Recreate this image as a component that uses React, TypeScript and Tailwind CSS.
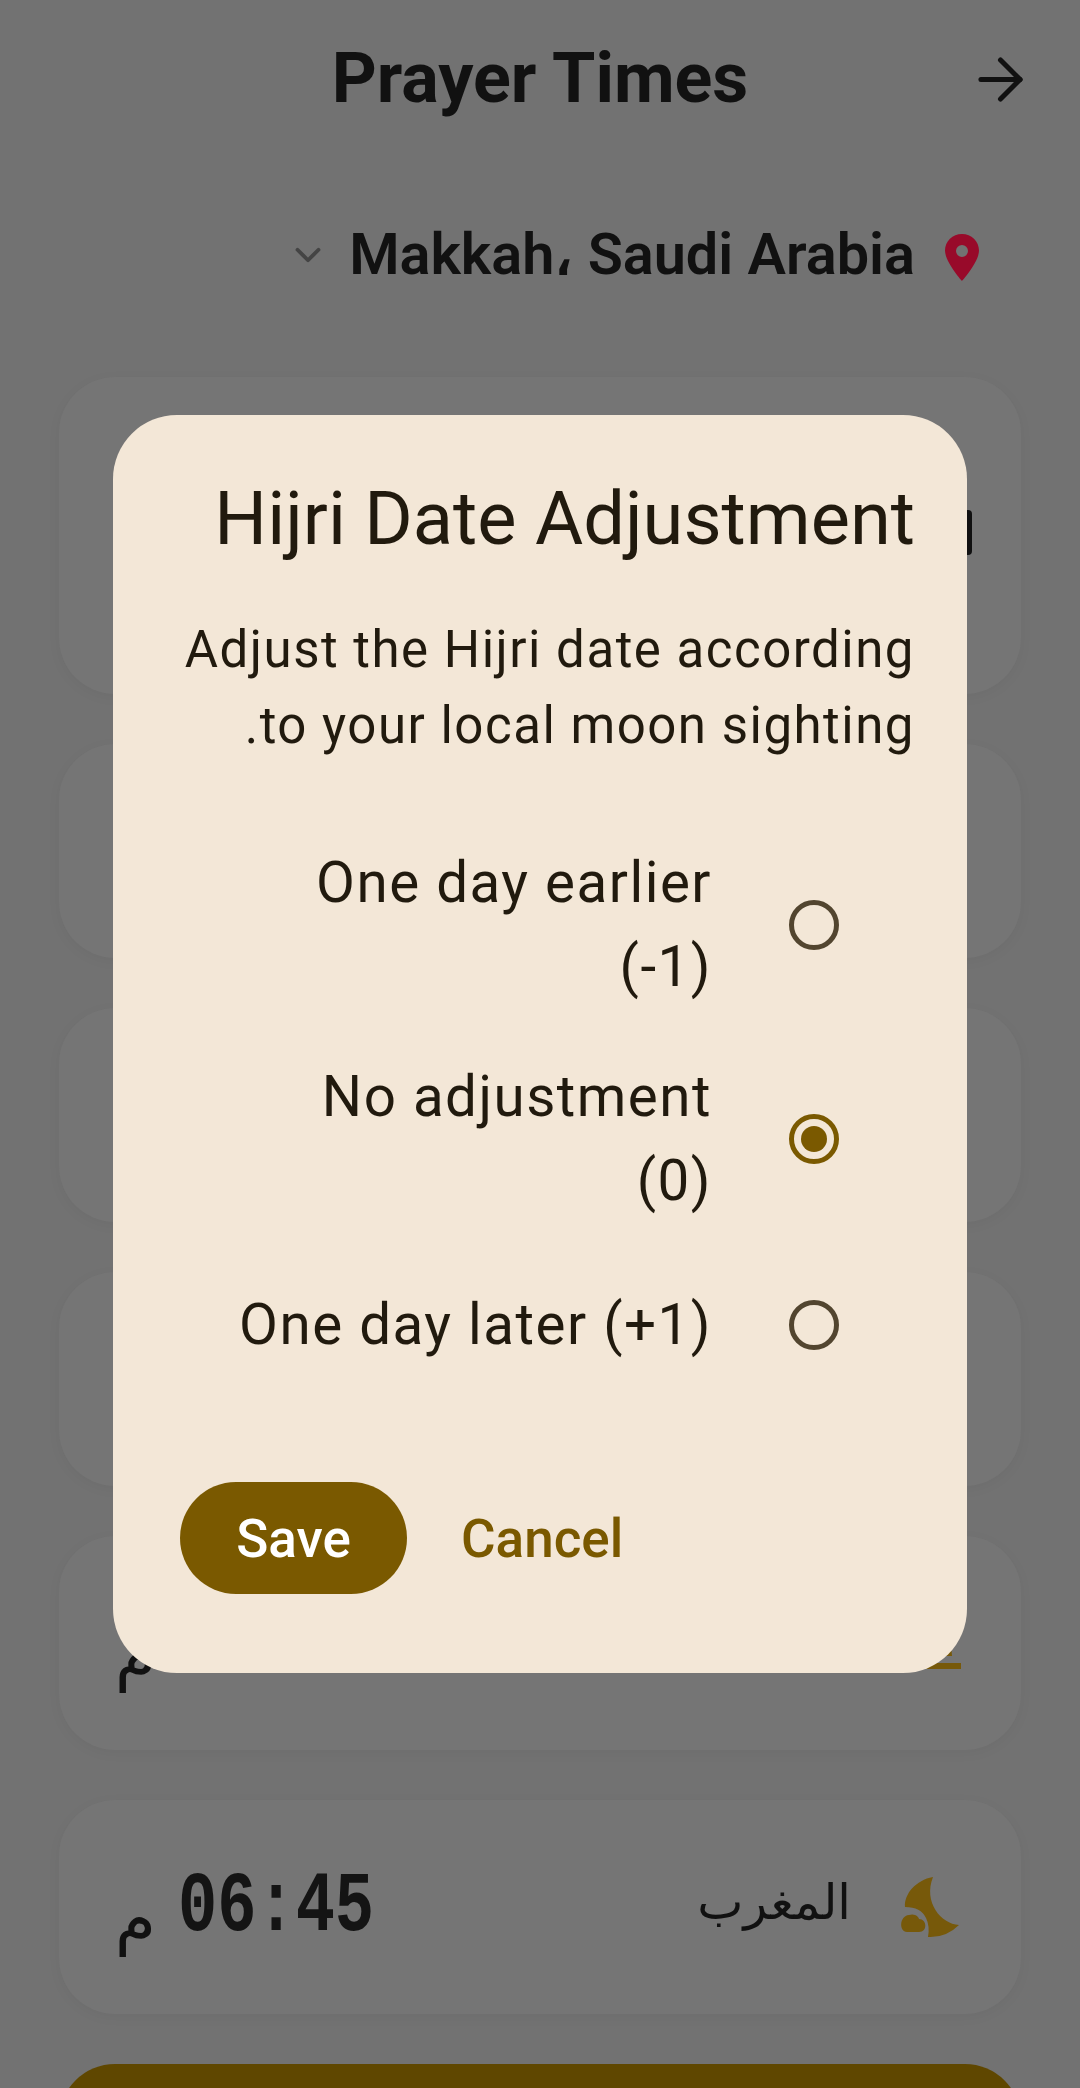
import { ArrowRight, ChevronDown } from 'lucide-react';

// Only what shows around the dialog is filled in; the rest of the rows sit behind it.
const prayers: { id: number; name?: string; time?: string; suffix?: string; icon?: 'sunset' | 'moon' }[] = [
  { id: 1 },
  { id: 2 },
  { id: 3 },
  { id: 4, suffix: 'م', icon: 'sunset' },
  { id: 5, name: 'المغرب', time: '06:45', suffix: 'م', icon: 'moon' },
];

const options = [
  { label: 'One day earlier (-1)', selected: false },
  { label: 'No adjustment (0)', selected: true },
  { label: 'One day later (+1)', selected: false },
];

const SunsetIcon = () => (
  <svg viewBox="0 0 64 64" className="h-[64px] w-[64px] fill-[#77590a]">
    <path d="M9 45a23 23 0 0 1 46 0z" />
    <rect x="0" y="52" width="64" height="6" />
  </svg>
);

const MoonIcon = () => (
  <svg viewBox="38 34 62 66" className="h-[66px] w-[62px] fill-[#77590a]">
    <path d="M72 37C55 40 43 54 44 67Q60 67 65 78Q69 86 67 97Q85 98 98 85C80 84 62 62 72 37Z" />
    <path d="M46 92C38 92 38 76 48 75C54 73 58 77 58 79C66 79 67 92 58 92Z" />
  </svg>
);

const PrayerCard = ({ name, time, suffix, icon }: (typeof prayers)[number]) => (
  <div className="flex h-[214px] items-center rounded-[56px] bg-[#757575] pr-[60px] pl-[56px] shadow-[0_3px_14px_rgba(0,0,0,0.04)]">
    {icon === 'moon' && <MoonIcon />}
    {icon === 'sunset' && <SunsetIcon />}
    {name && (
      <span className="mr-[48px] mb-[8px] font-['DejaVu_Sans',sans-serif] text-[49px] text-[#111]">{name}</span>
    )}
    <div className="mr-auto flex items-center gap-[22px]">
      {time && (
        <span
          dir="ltr"
          className="origin-center scale-x-[0.76] font-['Liberation_Mono',monospace] text-[86px] leading-none font-bold text-[#141414] -mx-[31px]"
        >
          {time}
        </span>
      )}
      {suffix && (
        <span className="mt-[24px] font-['DejaVu_Sans',sans-serif] text-[66px] leading-none text-[#111]">{suffix}</span>
      )}
    </div>
  </div>
);

const RadioRow = ({ label, selected, tall }: { label: string; selected: boolean; tall: boolean }) => (
  <div className={`flex items-center pr-[76px] ${tall ? 'h-[214px]' : 'h-[158px]'}`}>
    <div
      className={`flex h-[50px] w-[50px] shrink-0 items-center justify-center rounded-full border-[5.5px] ${
        selected ? 'border-[#7a5900]' : 'border-[#52452f]'
      }`}
    >
      {selected && <div className="h-[26px] w-[26px] rounded-full bg-[#7a5900]" />}
    </div>
    <span className="mr-[77px] w-[474px] text-[56.5px] leading-[84px] tracking-[1.5px] text-[#211a0e]">{label}</span>
  </div>
);

export default function App() {
  return (
    <div dir="rtl" className="relative h-[2088px] w-[1080px] overflow-hidden bg-[#727272] font-['Roboto',sans-serif]">
      {/* Page behind the dialog */}
      <div className="grid h-[156px] grid-cols-[1fr_auto_1fr] items-center px-[46px]">
        <ArrowRight size={67} strokeWidth={1.8} className="mt-[2px] justify-self-start text-[#111]" />
        <h1 className="text-[70px] font-bold text-[#111]">Prayer Times</h1>
        <div />
      </div>
      <div className="mt-[21px] flex h-[156px] items-center pr-[101px]">
        <svg viewBox="0 0 34 47" className="mt-[4px] h-[47px] w-[34px] fill-[#980a2a]">
          <path
            fillRule="evenodd"
            d="M17 0C7.6 0 0 7.4 0 16.6 0 28 17 47 17 47s17-19 17-30.4C34 7.4 26.4 0 17 0Zm0 11a6 6 0 1 1 0 12 6 6 0 0 1 0-12Z"
          />
        </svg>
        <span className="mr-[30px] text-[57.6px] font-semibold text-[#111]">Makkah، Saudi Arabia</span>
        <ChevronDown size={42} strokeWidth={2.2} className="mr-[20px] text-[#444]" />
      </div>

      <div className="mx-[59px] mt-[44px] flex flex-col gap-[50px]">
        <div className="relative h-[317px] rounded-[56px] bg-[#757575] shadow-[0_3px_14px_rgba(0,0,0,0.04)]">
          <div className="absolute top-[133px] left-[840px] h-[45px] w-[73px] rounded-[4px] bg-[#111]" />
        </div>
        {prayers.map((prayer) => (
          <PrayerCard key={prayer.id} {...prayer} />
        ))}
        <div className="h-[200px] rounded-[56px] bg-[#5f4700]" />
      </div>

      {/* Dialog */}
      <div className="absolute top-[415px] left-[113px] h-[1258px] w-[854px] rounded-[64px] bg-[#f3e7d7] pr-[52px] pl-[67px]">
        <h2 className="mt-[52px] text-[74px] leading-[104px] text-[#211a0e]">Hijri Date Adjustment</h2>
        <p className="mt-[41px] text-[51px] leading-[76px] tracking-[1.5px] text-[#211a0e]">
          Adjust the Hijri date according to your local moon sighting.
        </p>
        <div className="mt-[54px] flex flex-col">
          {options.map((option, i) => (
            <RadioRow key={option.label} label={option.label} selected={option.selected} tall={i < 2} />
          ))}
        </div>
        <div className="mt-[78px] flex items-center justify-end gap-[54px]">
          <button className="pt-[3px] text-[53px] font-medium text-[#7a5900]">Cancel</button>
          <button className="h-[112px] w-[227px] rounded-full bg-[#7a5900] pt-[3px] text-[53px] font-medium text-white">
            Save
          </button>
        </div>
      </div>
    </div>
  );
}
